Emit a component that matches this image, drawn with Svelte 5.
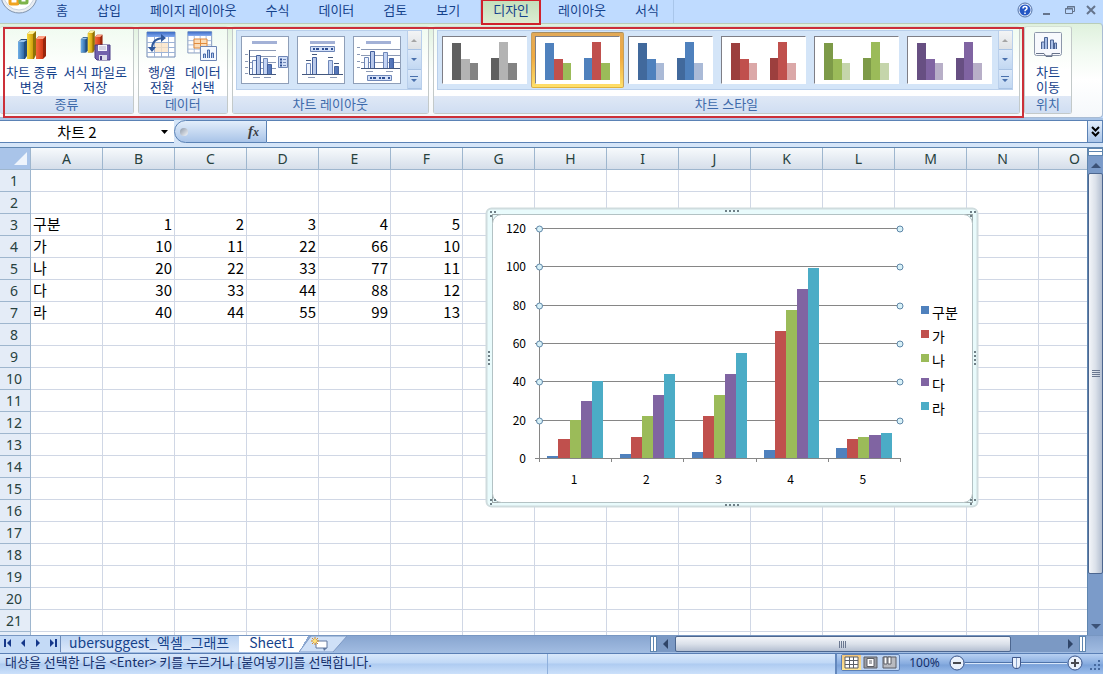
<script>
  const tabs = ['홈', '삽입', '페이지 레이아웃', '수식', '데이터', '검토', '보기'];
  const chartTabs = ['디자인', '레이아웃', '서식'];
  let activeTab = $state('디자인');

  const styles = [
    ['#606060', '#b3b3b3', '#838383'],
    ['#4f81bd', '#c0504d', '#9bbb59'],
    ['#41699c', '#4f81bd', '#aabad7'],
    ['#9c3f3e', '#c0504d', '#dba8a8'],
    ['#7d9a48', '#9bbb59', '#c5d5ab'],
    ['#674f82', '#8064a2', '#b8afc8']
  ];
  let activeStyle = $state(1);

  const columns = 'ABCDEFGHIJKLMNO'.split('');
  const rows = Array.from({ length: 21 }, (_, i) => i + 1);

  const series = [
    { name: '구분', color: '#4f81bd', values: [1, 2, 3, 4, 5] },
    { name: '가', color: '#c0504d', values: [10, 11, 22, 66, 10] },
    { name: '나', color: '#9bbb59', values: [20, 22, 33, 77, 11] },
    { name: '다', color: '#8064a2', values: [30, 33, 44, 88, 12] },
    { name: '라', color: '#4bacc6', values: [40, 44, 55, 99, 13] }
  ];

  function cell(row, col) {
    const s = series[row - 3];
    if (!s) return '';
    return col === 0 ? s.name : (s.values[col - 1] ?? '');
  }

  // chart geometry
  const plot = { left: 54, right: 415, top: 21, bottom: 251 };
  const catWidth = (plot.right - plot.left) / 5;
  const barWidth = catWidth / 6.5;
  const ticks = [0, 20, 40, 60, 80, 100, 120];

  const yPos = (v) => Math.round(plot.bottom - (v / 120) * (plot.bottom - plot.top));
  const barX = (c, s) => Math.round(plot.left + c * catWidth + barWidth * (0.75 + s));

  let cellName = $state('차트 2');
  let formula = $state('');
  let zoom = $state(100);
</script>

{#snippet galleryButtons()}
  <div class="gallery-scroll">
    <button aria-label="위로" disabled><svg width="12" height="18"><path d="M3 11h6l-3-3z" fill="#a5a5a5" /></svg></button>
    <button aria-label="아래로"><svg width="12" height="18"><path d="M3 8h6l-3 3z" fill="#4a71ad" /></svg></button>
    <button aria-label="자세히"><svg width="12" height="18"><path d="M2 6h8v1H2zM3 9h6l-3 3z" fill="#4a71ad" /></svg></button>
  </div>
{/snippet}

{#snippet tabButton(tab)}
  <button class="tab" class:active={tab === activeTab} onclick={() => (activeTab = tab)}>{tab}</button>
{/snippet}

{#snippet bars3d()}
  <path d="M2 12l3-3h6v17l-2 3H2z" fill="#234e7c" />
  <path d="M2 12h6v17H2z" fill="url(#blue3d)" />
  <path d="M2 12l3-2h6l-3 2z" fill="#9cc6ee" />
  <path d="M20 9l3-3h7v20l-3 3h-7z" fill="#99260c" />
  <path d="M20 9h7v20h-7z" fill="url(#red3d)" />
  <path d="M20 9l3-3h7l-3 3z" fill="#ffa184" />
  <path d="M11 4l3-3h6v24l-2 4h-7z" fill="#8f7106" />
  <path d="M11 4h6v25h-6z" fill="url(#gold3d)" />
  <path d="M11 4l3-3h6l-3 3z" fill="#fff09a" />
{/snippet}

{#snippet tableGrid()}
  <path d="M1 2h28v25H1z" fill="#fff" stroke="#7189b4" />
  <path d="M1 2h28v5H1z" fill="url(#tableHead)" />
  <path d="M1 12.5h28M1 17.5h28M1 22.5h28M8.5 7v20M15.5 7v20M22.5 7v20" stroke="#9db3d6" fill="none" />
{/snippet}

<div class="excel">
  <svg class="defs" width="0" height="0" aria-hidden="true">
    <defs>
      <linearGradient id="blue3d"><stop offset="0" stop-color="#6fb0e8" /><stop offset="1" stop-color="#3068a4" /></linearGradient>
      <linearGradient id="gold3d"><stop offset="0" stop-color="#f7d838" /><stop offset="1" stop-color="#cf9f0c" /></linearGradient>
      <linearGradient id="red3d"><stop offset="0" stop-color="#f5683e" /><stop offset="1" stop-color="#d23a16" /></linearGradient>
      <linearGradient id="tableHead" x2="0" y2="1"><stop offset="0" stop-color="#3c6cc4" /><stop offset="1" stop-color="#83aaf0" /></linearGradient>
      <linearGradient id="thumbBar"><stop offset="0" stop-color="#c3d1ee" /><stop offset="1" stop-color="#4b6eb5" /></linearGradient>
      <linearGradient id="thumbLight"><stop offset="0" stop-color="#f4f8ff" /><stop offset="1" stop-color="#bdcff2" /></linearGradient>
    </defs>
  </svg>

  <header class="tab-bar">
    <button class="office" aria-label="Office 단추">
      <svg width="42" height="23">
        <circle cx="19" cy="-5" r="18" fill="#e9edf2" stroke="#7f93ad" />
        <circle cx="19" cy="-5" r="15" fill="#fff" stroke="#c9d3df" />
        <rect x="10" y="-4" width="8" height="8" rx="1" fill="none" stroke="#f0a321" stroke-width="3" />
        <rect x="20" y="-5" width="7" height="8" rx="1" fill="none" stroke="#7db34a" stroke-width="3" />
      </svg>
    </button>
    <nav class="tabs">
      {#each tabs as tab}
        {@render tabButton(tab)}
      {/each}
    </nav>
    <nav class="tabs chart-tabs">
      {#each chartTabs as tab}
        {@render tabButton(tab)}
      {/each}
    </nav>
    <div class="window-buttons">
      <button aria-label="도움말">
        <svg width="16" height="16">
          <circle cx="8" cy="8" r="7" fill="#dce9fb" stroke="#5674a8" />
          <circle cx="8" cy="8" r="5.5" fill="#2456c4" />
          <path d="M6 6.500q0-2 2-2t2 1.700q0 1-1.200 1.600-.8.500-.8 1.400M8 10.500v1.500" fill="none" stroke="#fff" stroke-width="1.500" />
        </svg>
      </button>
      <button aria-label="최소화"><svg width="16" height="16"><path d="M4 11h7v2H4z" fill="#65748c" /></svg></button>
      <button aria-label="복원">
        <svg width="16" height="16"><path d="M6.500 7V4.500h7v5H11M4.500 6.500h7v5h-7zM6 5h8M4 7h8" fill="none" stroke="#65748c" /></svg>
      </button>
      <button aria-label="닫기"><svg width="16" height="16"><path d="M4 4l8 8M12 4l-8 8" stroke="#65748c" stroke-width="2" /></svg></button>
    </div>
  </header>

  <div class="ribbon">
    <div class="marked-groups">
      <section class="group">
        <div class="group-body tools kind">
          <button class="tool">
            <svg width="32" height="32">{@render bars3d()}</svg>
            <span>차트 종류<br />변경</span>
          </button>
          <button class="tool">
            <svg width="32" height="32">
              <svg width="27" height="24" viewBox="0 0 34 31">{@render bars3d()}</svg>
              <path d="M16 15h15v15H18l-2-2z" fill="#7262ac" stroke="#4b3d86" />
              <path d="M19 15h9v6h-9z" fill="#f5f5fb" />
              <path d="M20 17h7M20 19h7" stroke="#b3afd0" />
              <path d="M20 25h8v5h-8z" fill="#dcdcea" />
              <path d="M21 26h2v4h-2z" fill="#4b3d86" />
            </svg>
            <span>서식 파일로<br />저장</span>
          </button>
        </div>
        <h2>종류</h2>
      </section>

      <section class="group">
        <div class="group-body tools data">
          <button class="tool">
            <svg width="32" height="32">
              {@render tableGrid()}
              <path d="M9 13h13v9H9z" fill="#fbe3c6" opacity=".8" />
              <path d="M6 19q0-11 12-11" fill="none" stroke="#31599c" stroke-width="2" />
              <path d="M2 17h8l-4 5zM15 4v8l5-4z" fill="#31599c" />
            </svg>
            <span>행/열<br />전환</span>
          </button>
          <button class="tool">
            <svg width="32" height="32">
              <g transform="scale(.85)">{@render tableGrid()}</g>
              <path d="M7 9h13v9H7z" fill="#fbdcb8" stroke="#e08a3c" />
              <path d="M13.500 9v9M7 13.500h13" stroke="#e08a3c" />
              <path d="M13.500 16.500h16v14h-16z" fill="#f4f8ff" stroke="#6d86b5" />
              <path d="M16.500 28v-4h2v4M20.500 28v-8h2v8M24.500 28v-5h2v5" fill="#b9cbec" stroke="#4669a8" />
            </svg>
            <span>데이터<br />선택</span>
          </button>
        </div>
        <h2>데이터</h2>
      </section>

      <section class="group">
        <div class="group-body">
          <div class="gallery">
            <div class="gallery-items">
              <button class="swatch" aria-label="레이아웃 1">
                <svg class="layout" width="48" height="48">
                  <path d="M10 4h25v3H10z" fill="#a3b1d6" />
                  <path d="M7 13.500h27M7 19.500h27M7 25.500h27M7 31.500h27M3 17.500h3M3 24.500h3M3 30.500h3M3 36.500h3" stroke="#8b99b5" />
                  <path d="M10.500 37V23.500h4V37M21.500 37V21.500h4V37" fill="url(#thumbLight)" stroke="#6f87b8" />
                  <path d="M14.500 37V18.500h4V37M25.500 37V27.500h4V37" fill="url(#thumbBar)" stroke="#44619e" />
                  <path d="M7.500 13v24.500H34" fill="none" stroke="#44587e" />
                  <path d="M11 40.500h7M22 40.500h7" stroke="#8b99b5" />
                  <path d="M36.500 19.500h9v11h-9z" fill="#d3e0f8" stroke="#6f87b8" />
                  <path d="M38 22.500h2M38 25.500h2M38 28.500h2" stroke="#2f4f93" stroke-width="2" />
                  <path d="M41 22.500h3M41 25.500h3M41 28.500h3" stroke="#6f87b8" />
                </svg>
              </button>
              <button class="swatch" aria-label="레이아웃 2">
                <svg class="layout" width="48" height="48">
                  <path d="M12 4h25v3H12z" fill="#a3b1d6" />
                  <path d="M12.500 9.500h24v5h-24z" fill="#d3e0f8" stroke="#6f87b8" />
                  <path d="M15 12h20" stroke="#2f4f93" stroke-width="2" stroke-dasharray="2 1 3 3" />
                  <path d="M8.500 37V26.500h4V37M30.500 37V23.500h4V37" fill="url(#thumbLight)" stroke="#6f87b8" />
                  <path d="M14.500 37V20.500h4V37M36.500 37V29.500h4V37" fill="url(#thumbBar)" stroke="#44619e" />
                  <path d="M4 37.500h41M8 23.500h5M14 17.500h5M30 20.500h5M36 26.500h5" stroke="#44587e" />
                  <path d="M10 40.500h7M32 40.500h7" stroke="#8b99b5" />
                </svg>
              </button>
              <button class="swatch" aria-label="레이아웃 3">
                <svg class="layout" width="48" height="48">
                  <path d="M12 4h25v3H12z" fill="#a3b1d6" />
                  <path d="M7 12.500h39M7 18.500h39M7 25.500h39M3 10.500h3M3 17.500h3M3 24.500h3M3 30.500h3" stroke="#8b99b5" />
                  <path d="M10.500 31V20.500h4V31M29.500 31V15.500h4V31" fill="url(#thumbLight)" stroke="#6f87b8" />
                  <path d="M16.500 31V14.500h4V31M35.500 31V21.500h4V31" fill="url(#thumbBar)" stroke="#44619e" />
                  <path d="M7 31.500h39" stroke="#44587e" />
                  <path d="M12 34.500h7M32 34.500h7" stroke="#8b99b5" />
                  <path d="M13.500 38.500h24v5h-24z" fill="#d3e0f8" stroke="#6f87b8" />
                  <path d="M16 41h20" stroke="#2f4f93" stroke-width="2" stroke-dasharray="2 1 3 3" />
                </svg>
              </button>
            </div>
            {@render galleryButtons()}
          </div>
        </div>
        <h2>차트 레이아웃</h2>
      </section>

      <section class="group styles">
        <div class="group-body">
          <div class="gallery">
            <div class="gallery-items">
              {#each styles as [a, b, c], i}
                <button class="swatch" class:selected={i === activeStyle} aria-label="스타일 {i + 1}" onclick={() => (activeStyle = i)}>
                  <svg class="style" width="85" height="48" shape-rendering="crispEdges">
                    <path d="M9 6h9v37H9zM48 21h8v22h-8z" fill={a} />
                    <path d="M18 22h9v21h-9zM56 5h9v38h-9z" fill={b} />
                    <path d="M27 26h8v17h-8zM65 26h9v17h-9z" fill={c} />
                  </svg>
                </button>
              {/each}
            </div>
            {@render galleryButtons()}
          </div>
        </div>
        <h2>차트 스타일</h2>
      </section>
    </div>

    <section class="group">
      <div class="group-body tools move">
        <button class="tool">
          <svg width="32" height="32">
            <path d="M2.500 3.500q0-1 1-1h25q1 0 1 1v20q0 2-2 2h-23q-2 0-2-2z" fill="#f7f9fd" stroke="#8d98ab" />
            <path d="M4 23.500h8l2 3h6v-3h8" fill="none" stroke="#67738a" />
            <path d="M9.500 19v-7h3v7M12.500 19V7.500h3V19M18.500 19v-9h3v9M22.500 19v-6h2v6" fill="#a9bfe6" stroke="#4c6594" />
          </svg>
          <span>차트<br />이동</span>
        </button>
      </div>
      <h2>위치</h2>
    </section>
  </div>

  <div class="formula-bar">
    <input class="name-box" aria-label="이름 상자" bind:value={cellName} />
    <button class="name-arrow" aria-label="이름 목록"><svg width="9" height="6"><path d="M1 1h7L4.500 5z" /></svg></button>
    <div class="fx">
      <span class="knob"></span>
      <button aria-label="함수 삽입"><i>f</i><i class="x">x</i></button>
    </div>
    <input class="formula" aria-label="수식 입력줄" bind:value={formula} />
    <button class="expand" aria-label="수식 입력줄 확장">
      <svg width="9" height="11"><path d="M1 1l3.500 3.500L8 1M1 6l3.500 3.500L8 6" fill="none" stroke="#000" stroke-width="2" /></svg>
    </button>
  </div>

  <main class="workspace">
    <div class="sheet">
      <table>
        <thead>
          <tr>
            <th class="corner" aria-label="모두 선택"><svg width="14" height="14"><path d="M13 0v13H0z" fill="#eef4fc" /></svg></th>
            {#each columns as col}
              <th scope="col">{col}</th>
            {/each}
          </tr>
        </thead>
        <tbody>
          {#each rows as row}
            <tr>
              <th scope="row">{row}</th>
              {#each columns as _, c}
                <td class:label={c === 0}>{cell(row, c)}</td>
              {/each}
            </tr>
          {/each}
          <tr>
            <th></th>
            {#each columns as _}
              <td></td>
            {/each}
          </tr>
        </tbody>
      </table>

      <div class="chart">
        <svg width="494" height="302">
          <rect x="1.500" y="1.500" width="491" height="298" rx="5" fill="#e9fbfc" stroke="#cfdcde" stroke-width="2" />
          <rect x="7.500" y="7.500" width="480" height="288" fill="#e9fbfc" stroke="#9fa9ab" />
          <rect x="7.500" y="7.500" width="480" height="288" rx="9" fill="#fff" stroke="#b3c2c4" />
          <g fill="#6e7f86">
            {#each [5, 485] as x}
              {#each [4, 292] as y}
                <path d="M{x} {y}h2v2h-2zM{x + 4} {y}h2v2h-2zM{x} {y + 4}h2v2h-2z" />
              {/each}
            {/each}
            {#each [0, 4, 8, 12] as d}
              <path d="M{240 + d} 3h2v2h-2zM{240 + d} 297h2v2h-2zM3 {144 + d}h2v2H3zM489 {144 + d}h2v2h-2z" />
            {/each}
          </g>

          <g shape-rendering="crispEdges">
            {#each ticks as t}
              <path d="M{plot.left - 4} {yPos(t) + 0.5}H{plot.right}" stroke="#868686" />
            {/each}
            {#each series as s, i}
              {#each s.values as v, c}
                <rect x={barX(c, i)} y={yPos(v)} width={barX(c, i + 1) - barX(c, i)} height={plot.bottom - yPos(v)} fill={s.color} />
              {/each}
            {/each}
            <path d="M{plot.left + 0.5} {plot.top}V{plot.bottom}" stroke="#868686" />
            {#each [0, 1, 2, 3, 4, 5] as c}
              <path d="M{Math.round(plot.left + c * catWidth) + 0.5} {plot.bottom}v4" stroke="#868686" />
            {/each}
          </g>

          {#each ticks as t}
            <text x="41" y={yPos(t) + 5} text-anchor="end">{t}</text>
            {#if t > 0}
              <circle cx={plot.left + 0.5} cy={yPos(t) + 1} r="3" />
              <circle cx={plot.right} cy={yPos(t) + 1} r="3" />
            {/if}
          {/each}
          {#each [1, 2, 3, 4, 5] as n}
            <text x={plot.left + (n - 0.5) * catWidth - 1} y="277" text-anchor="middle">{n}</text>
          {/each}
          {#each series as s, i}
            <rect x="436" y={99 + i * 24} width="8" height="8" fill={s.color} />
            <text class="legend" x="447" y={111 + i * 24}>{s.name}</text>
          {/each}
        </svg>
      </div>
    </div>

    <div class="v-scroll">
      <button class="split" aria-label="창 나누기"></button>
      <button class="arrow" aria-label="위로 스크롤"><svg width="10" height="6"><path d="M0 6h10L5 1z" fill="#3c5277" /></svg></button>
      <div class="thumb"><span class="grip"></span></div>
      <div class="track"></div>
      <button class="arrow" aria-label="아래로 스크롤"><svg width="10" height="6"><path d="M0 0h10L5 5z" fill="#3c5277" /></svg></button>
    </div>
  </main>

  <div class="sheet-bar">
    <div class="sheet-nav">
      <button aria-label="첫 시트"><svg width="8" height="8"><path d="M0 0h2v8H0zM7 0v8L3 4z" /></svg></button>
      <button aria-label="이전 시트"><svg width="8" height="8"><path d="M6 0v8L2 4z" /></svg></button>
      <button aria-label="다음 시트"><svg width="8" height="8"><path d="M2 0v8l4-4z" /></svg></button>
      <button aria-label="마지막 시트"><svg width="8" height="8"><path d="M6 0h2v8H6zM1 0v8l4-4z" /></svg></button>
    </div>
    <button class="sheet-tab">ubersuggest_엑셀_그래프</button>
    <button class="sheet-tab current">Sheet1</button>
    <button class="new-sheet" aria-label="워크시트 삽입">
      <svg width="48" height="16">
        <path d="M0 16L12 0h36L34 16z" fill="#cfe0f7" stroke="#7d99c4" />
        <path d="M17 5h11v7H17z" fill="#fff" stroke="#60779e" />
        <path d="M24 12h4l-3 3z" fill="#60779e" />
        <path d="M16 1v8M12 5h8M13 2l6 6M19 2l-6 6" stroke="#d98b1c" />
        <circle cx="16" cy="5" r="2" fill="#ffe27a" />
      </svg>
    </button>
    <div class="h-scroll">
      <button class="h-split" aria-label="탭 너비"></button>
      <button class="h-arrow" aria-label="왼쪽으로 스크롤"><svg width="6" height="10"><path d="M5 0v10L0 5z" fill="#2f4568" /></svg></button>
      <div class="h-thumb"><span class="h-grip"></span></div>
      <div class="h-track"></div>
      <button class="h-arrow" aria-label="오른쪽으로 스크롤"><svg width="6" height="10"><path d="M1 0v10l5-5z" fill="#2f4568" /></svg></button>
      <button class="h-split" aria-label="창 세로 나누기"></button>
    </div>
  </div>

  <footer class="status-bar">
    <p>대상을 선택한 다음 &lt;Enter&gt; 키를 누르거나 [붙여넣기]를 선택합니다.</p>
    <div class="status-space"></div>
    <div class="view-panel">
      <div class="views">
        <button class="on" aria-label="기본"><svg width="15" height="13"><path d="M1 1h13v11H1z" fill="#fff" stroke="#5c5f66" /><path d="M1 4.500h13M1 8.500h13M5.500 1v11M9.500 1v11" stroke="#5c5f66" /></svg></button>
        <button aria-label="페이지 레이아웃"><svg width="15" height="13"><path d="M1 1h13v11H1z" fill="#9a9da3" stroke="#5c5f66" /><path d="M4 2.500h7v8H4z" fill="#fff" stroke="#5c5f66" /><path d="M6 5h3M6 7h3" stroke="#5c5f66" /></svg></button>
        <button aria-label="페이지 나누기"><svg width="15" height="13"><path d="M1 1h13v11H1z" fill="#b8bac0" stroke="#5c5f66" /><path d="M2 1h3v7H2zM6 1h3v7H6z" fill="#fff" stroke="#5c5f66" /></svg></button>
      </div>
      <output class="percent" for="zoom">{zoom}%</output>
      <button class="zoom-button" aria-label="축소" onclick={() => (zoom = Math.max(10, zoom - 10))}>
        <svg width="16" height="16"><circle cx="8" cy="8" r="7" fill="#e9f1fc" stroke="#38548a" /><path d="M4 7h8v2H4z" fill="#47494f" /></svg>
      </button>
      <input id="zoom" type="range" min="10" max="190" aria-label="확대/축소" bind:value={zoom} />
      <button class="zoom-button" aria-label="확대" onclick={() => (zoom = Math.min(190, zoom + 10))}>
        <svg width="16" height="16"><circle cx="8" cy="8" r="7" fill="#e9f1fc" stroke="#38548a" /><path d="M4 7h8v2H4zM7 4h2v8H7z" fill="#47494f" /></svg>
      </button>
      <svg class="resize" width="12" height="12"><path d="M9 1h2v2H9zM5 5h2v2H5zM9 5h2v2H9zM1 9h2v2H1zM5 9h2v2H5zM9 9h2v2H9z" fill="#46699f" /></svg>
    </div>
  </footer>
</div>

<style>
  :global(body) {
    margin: 0;
  }

  .excel {
    display: flex;
    flex-direction: column;
    height: 100vh;
    overflow: hidden;
    background: #bfdbff;
    color: #15428b;
    font-family: "Noto Sans CJK KR", "Noto Sans", sans-serif;
    font-size: 13px;
  }

  .excel * {
    box-sizing: border-box;
  }

  .defs {
    position: absolute;
  }

  button {
    padding: 0;
    border: 0;
    background: none;
    color: inherit;
    font: inherit;
  }

  svg {
    display: block;
  }

  /* tabs */
  .tab-bar {
    display: flex;
    flex: none;
    height: 23px;
  }

  .tabs {
    display: flex;
    gap: 1px;
    padding-right: 6px;
    border-right: 1px solid #a9c6ea;
  }

  .tab {
    padding: 0 14px 3px;
    line-height: 20px;
    white-space: nowrap;
  }

  .chart-tabs {
    gap: 5px;
    padding-right: 2px;
  }

  .chart-tabs .tab {
    padding: 0 12px 3px;
  }

  .tab.active {
    position: relative;
    background: linear-gradient(#c3dfba, #dcecd2);
  }

  .tab.active::after {
    content: '';
    position: absolute;
    inset: -1px 0 -2px;
    z-index: 2;
    border: 2px solid #d0222c;
  }

  .window-buttons {
    display: flex;
    gap: 6px;
    margin-left: auto;
    padding: 2px 4px 0 0;
  }

  .window-buttons button {
    height: 16px;
  }

  /* ribbon */
  .ribbon {
    display: flex;
    flex: none;
    gap: 4px;
    height: 95px;
    padding: 2px 30px 3px 0;
    border: 1px solid #a9bcd4;
    border-top-color: #b9cdb9;
    border-left: 0;
    border-radius: 0 4px 4px 0;
    background: linear-gradient(#dff1dd, #f1faf1 30%, #fff 60%, #f5f8fb);
    font-family: "Liberation Sans", "Noto Sans CJK KR", sans-serif;
  }

  .marked-groups {
    position: relative;
    display: flex;
    flex: 1;
    gap: 4px;
    min-width: 0;
  }

  .marked-groups::after {
    content: '';
    position: absolute;
    inset: 1px -4px -4px 3px;
    border: 2px solid #cc3039;
    pointer-events: none;
  }

  .group {
    display: flex;
    flex-direction: column;
    border: 1px solid #c3c9c9;
    border-top-color: #d5e0d5;
    border-radius: 3px;
    background: linear-gradient(#f0fbf0, #fff 50%);
  }

  .group:first-child {
    border-left: 0;
  }

  .group.styles {
    flex: 1;
    min-width: 0;
  }

  .group-body {
    flex: 1;
    padding: 3px 6px 0 3px;
  }

  h2 {
    margin: 0;
    background: linear-gradient(#dfe8f6, #d0def2);
    color: #3e6aaa;
    font-size: 13px;
    font-weight: 400;
    line-height: 17px;
    text-align: center;
  }

  .tools {
    display: flex;
    justify-content: center;
    gap: 6px;
  }

  .kind,
  .move {
    padding: 3px 6px 0;
  }

  .data {
    padding: 3px 6px 0;
  }

  .tool {
    display: flex;
    flex-direction: column;
    align-items: center;
    gap: 3px;
    min-width: 34px;
    height: 66px;
    line-height: 15px;
    white-space: nowrap;
  }

  .gallery {
    display: flex;
    justify-content: space-between;
    height: 60px;
    border: 1px solid #b9cfeb;
    background: #d4e5f8;
  }

  .gallery-items {
    display: flex;
    padding: 1px 2px 1px 0;
    overflow: hidden;
  }

  .swatch {
    flex: none;
    padding: 3px;
    border: 1px solid transparent;
    border-radius: 2px;
  }

  .swatch.selected {
    border-color: #a68d62 #c8a05a #e0b23c;
    background: linear-gradient(#e2a957, #f0aa41 45%, #ffe06a);
  }

  .layout,
  .style {
    border: 1px solid #8f9fb8;
    background: #fff;
  }

  .style {
    border-color: #7e7e86 #fff #fff #7e7e86;
  }

  .gallery-scroll {
    display: flex;
    flex: none;
    flex-direction: column;
    width: 14px;
    border-left: 1px solid #b9cfeb;
  }

  .gallery-scroll button {
    flex: 1;
    border-bottom: 1px solid #a9c3e4;
    background: linear-gradient(#dce9f9, #c2d8f2);
  }

  .gallery-scroll button:disabled {
    background: linear-gradient(#f3f4f5, #dfe2e5);
  }

  /* formula bar */
  .formula-bar {
    display: flex;
    flex: none;
    height: 30px;
    padding: 2px 0 4px;
    border-bottom: 1px solid #5f86b0;
    background: linear-gradient(#a9c4e6 2px, #d5e5f8 2px);
    color: #000;
  }

  .formula-bar > * {
    height: 23px;
    border: 0 solid #5b82b5;
    border-width: 1px 0;
    background: #fff;
  }

  .name-box {
    width: 154px;
    padding: 0;
    font: 15px/20px "Noto Sans CJK KR", sans-serif;
    text-align: center;
  }

  .name-arrow {
    display: flex;
    align-items: center;
    justify-content: center;
    width: 20px;
  }

  .formula-bar .fx {
    display: flex;
    align-items: center;
    justify-content: space-between;
    width: 93px;
    padding: 0 7px 0 5px;
    border-width: 1px;
    border-radius: 12px 0 0 12px;
    background: linear-gradient(#e3eefb, #a9c4e8);
  }

  .knob {
    width: 8px;
    height: 8px;
    border-radius: 50%;
    background: linear-gradient(135deg, #8d99a9, #f4f6f9);
  }

  .fx button {
    color: #3a3d42;
    font: bold 15px/18px "Liberation Serif", serif;
  }

  .fx .x {
    font-size: 12px;
  }

  .formula {
    flex: 1;
    min-width: 0;
    padding: 0 4px;
    font: 15px/20px "Noto Sans CJK KR", sans-serif;
  }

  .formula-bar .expand {
    display: flex;
    align-items: center;
    justify-content: center;
    width: 16px;
    border-width: 1px;
    background: linear-gradient(#e3eefb, #a9c4e8);
  }

  /* worksheet */
  .workspace {
    display: flex;
    flex: 1;
    min-height: 0;
  }

  .sheet {
    position: relative;
    flex: 1;
    min-width: 0;
    overflow: hidden;
    background: #fff;
    color: #000;
  }

  table {
    width: 1111px;
    border-spacing: 0;
    table-layout: fixed;
    font-size: 15px;
  }

  th,
  td {
    height: 22px;
    padding: 0 2px;
    border: 0 solid #d0d7e5;
    border-width: 0 1px 1px 0;
    line-height: 20px;
    text-align: right;
    vertical-align: top;
    white-space: nowrap;
  }

  td.label {
    text-align: left;
  }

  th {
    width: 72px;
    padding: 0;
    border-color: #9eb6ce;
    background: linear-gradient(#f7fafc, #d5deea);
    color: #27413e;
    font-family: "Noto Sans", sans-serif;
    font-size: 14px;
    font-weight: 400;
    line-height: 21px;
    text-align: center;
  }

  tbody th {
    padding-right: 2px;
    background: #e4ecf7;
  }

  th.corner {
    width: 31px;
    background: #a9c4e9;
  }

  .corner svg {
    margin: 4px 2px 0 auto;
  }

  .chart {
    position: absolute;
    top: 59px;
    left: 485px;
  }

  .chart text {
    font-size: 12px;
  }

  .chart .legend {
    font-size: 14px;
  }

  .chart circle {
    fill: #d8f1f8;
    stroke: #5f87a8;
  }

  /* scroll bars */
  .v-scroll {
    display: flex;
    flex: none;
    flex-direction: column;
    width: 16px;
    border-left: 1px solid #5f86b0;
    background: #7b9bc9;
  }

  .split {
    height: 8px;
    border: 1px solid #5f86b0;
    background: linear-gradient(#fff 2px, #5f86b0 2px, #5f86b0 3px, #fff 3px);
  }

  .arrow {
    display: flex;
    align-items: center;
    justify-content: center;
    height: 17px;
  }

  .thumb {
    display: flex;
    flex: 400;
    align-items: center;
    justify-content: center;
    border: 1px solid #4d6790;
    border-radius: 2px;
    background: linear-gradient(90deg, #f3f5f9, #dbe1ea 50%, #b4bfd1);
  }

  .grip {
    width: 8px;
    height: 8px;
    background: repeating-linear-gradient(#6b7890 0 1px, transparent 1px 2px);
  }

  .track {
    flex: 44;
  }

  .sheet-bar {
    display: flex;
    flex: none;
    height: 18px;
    border-top: 1px solid #7897c2;
    background: linear-gradient(#88a5d0, #a2bde2);
  }

  .sheet-nav {
    display: flex;
    align-items: center;
    justify-content: space-around;
    width: 60px;
    padding-bottom: 3px;
    background: #c4daf6;
    fill: #16388a;
  }

  .sheet-tab {
    height: 16px;
    padding: 0 10px 3px 8px;
    border: solid #6d8cba;
    border-width: 0 0 0 1px;
    background: linear-gradient(#bcd4f3, #dbe8fa);
    font-size: 14px;
    line-height: 13px;
    white-space: nowrap;
  }

  .sheet-tab.current {
    padding: 0 4px 3px 10px;
    border: 0;
    background: #fff;
  }

  .new-sheet {
    height: 16px;
    background: linear-gradient(120deg, #fff 8px, transparent 8px);
  }

  .h-scroll {
    display: flex;
    width: 436px;
    height: 16px;
    margin: 0 17px 0 auto;
    background: #7b99c4;
  }

  .h-split {
    width: 7px;
    border: 1px solid #5f86b0;
    background: linear-gradient(90deg, #fff 2px, #5f86b0 2px, #5f86b0 3px, #fff 3px);
  }

  .h-arrow {
    display: flex;
    align-items: center;
    justify-content: center;
    width: 18px;
  }

  .h-thumb {
    display: flex;
    flex: 336;
    align-items: center;
    justify-content: center;
    border: 1px solid #4d6790;
    border-radius: 2px;
    background: linear-gradient(#f3f5f9, #dbe1ea 50%, #b4bfd1);
  }

  .h-grip {
    width: 8px;
    height: 7px;
    background: repeating-linear-gradient(90deg, #6b7890 0 1px, transparent 1px 2px);
  }

  .h-track {
    flex: 50;
  }

  /* status bar */
  .status-bar {
    display: flex;
    flex: none;
    height: 21px;
    border-top: 1px solid #5a7fb5;
    background: linear-gradient(#d9e8fb, #c0d8f6 45%, #aecbf1 50%, #cbe0fa);
    line-height: 16px;
  }

  .status-bar p {
    width: 548px;
    margin: 0;
    padding-left: 5px;
    border-right: 1px solid #8fb0dc;
    color: #142f6b;
    white-space: nowrap;
  }

  .status-space {
    flex: 1;
  }

  .view-panel {
    display: flex;
    align-items: center;
    padding: 0 2px 3px 4px;
    border-left: 2px solid #6488bd;
    background: linear-gradient(#b7d0f2, #86abdf 50%, #7ba2d9 55%, #9dbfed);
  }

  .views {
    display: flex;
    border: 1px solid #5d7fb5;
    border-radius: 2px;
    background: #bed4f2;
  }

  .views button {
    padding: 1px 2px;
  }

  .views .on {
    background: linear-gradient(#f3c67c, #ffe693);
  }

  .percent {
    width: 49px;
    color: #142f6b;
    font-family: "Noto Sans", sans-serif;
    font-size: 12px;
    text-align: center;
  }

  input[type='range'] {
    width: 102px;
    height: 16px;
    margin: 0;
    appearance: none;
    background: linear-gradient(transparent 7px, #4e73a9 7px, #4e73a9 8px, #d8e7fa 8px, #d8e7fa 9px, transparent 9px);
  }

  input[type='range']::-webkit-slider-thumb {
    width: 9px;
    height: 12px;
    border: 1px solid #40588a;
    border-radius: 1px 1px 5px 5px;
    appearance: none;
    background: linear-gradient(90deg, #e9f1fc 3px, #8ba4ca 3px, #8ba4ca 4px, #e9f1fc 4px);
  }

  .resize {
    align-self: flex-end;
    margin-left: 6px;
  }
</style>
